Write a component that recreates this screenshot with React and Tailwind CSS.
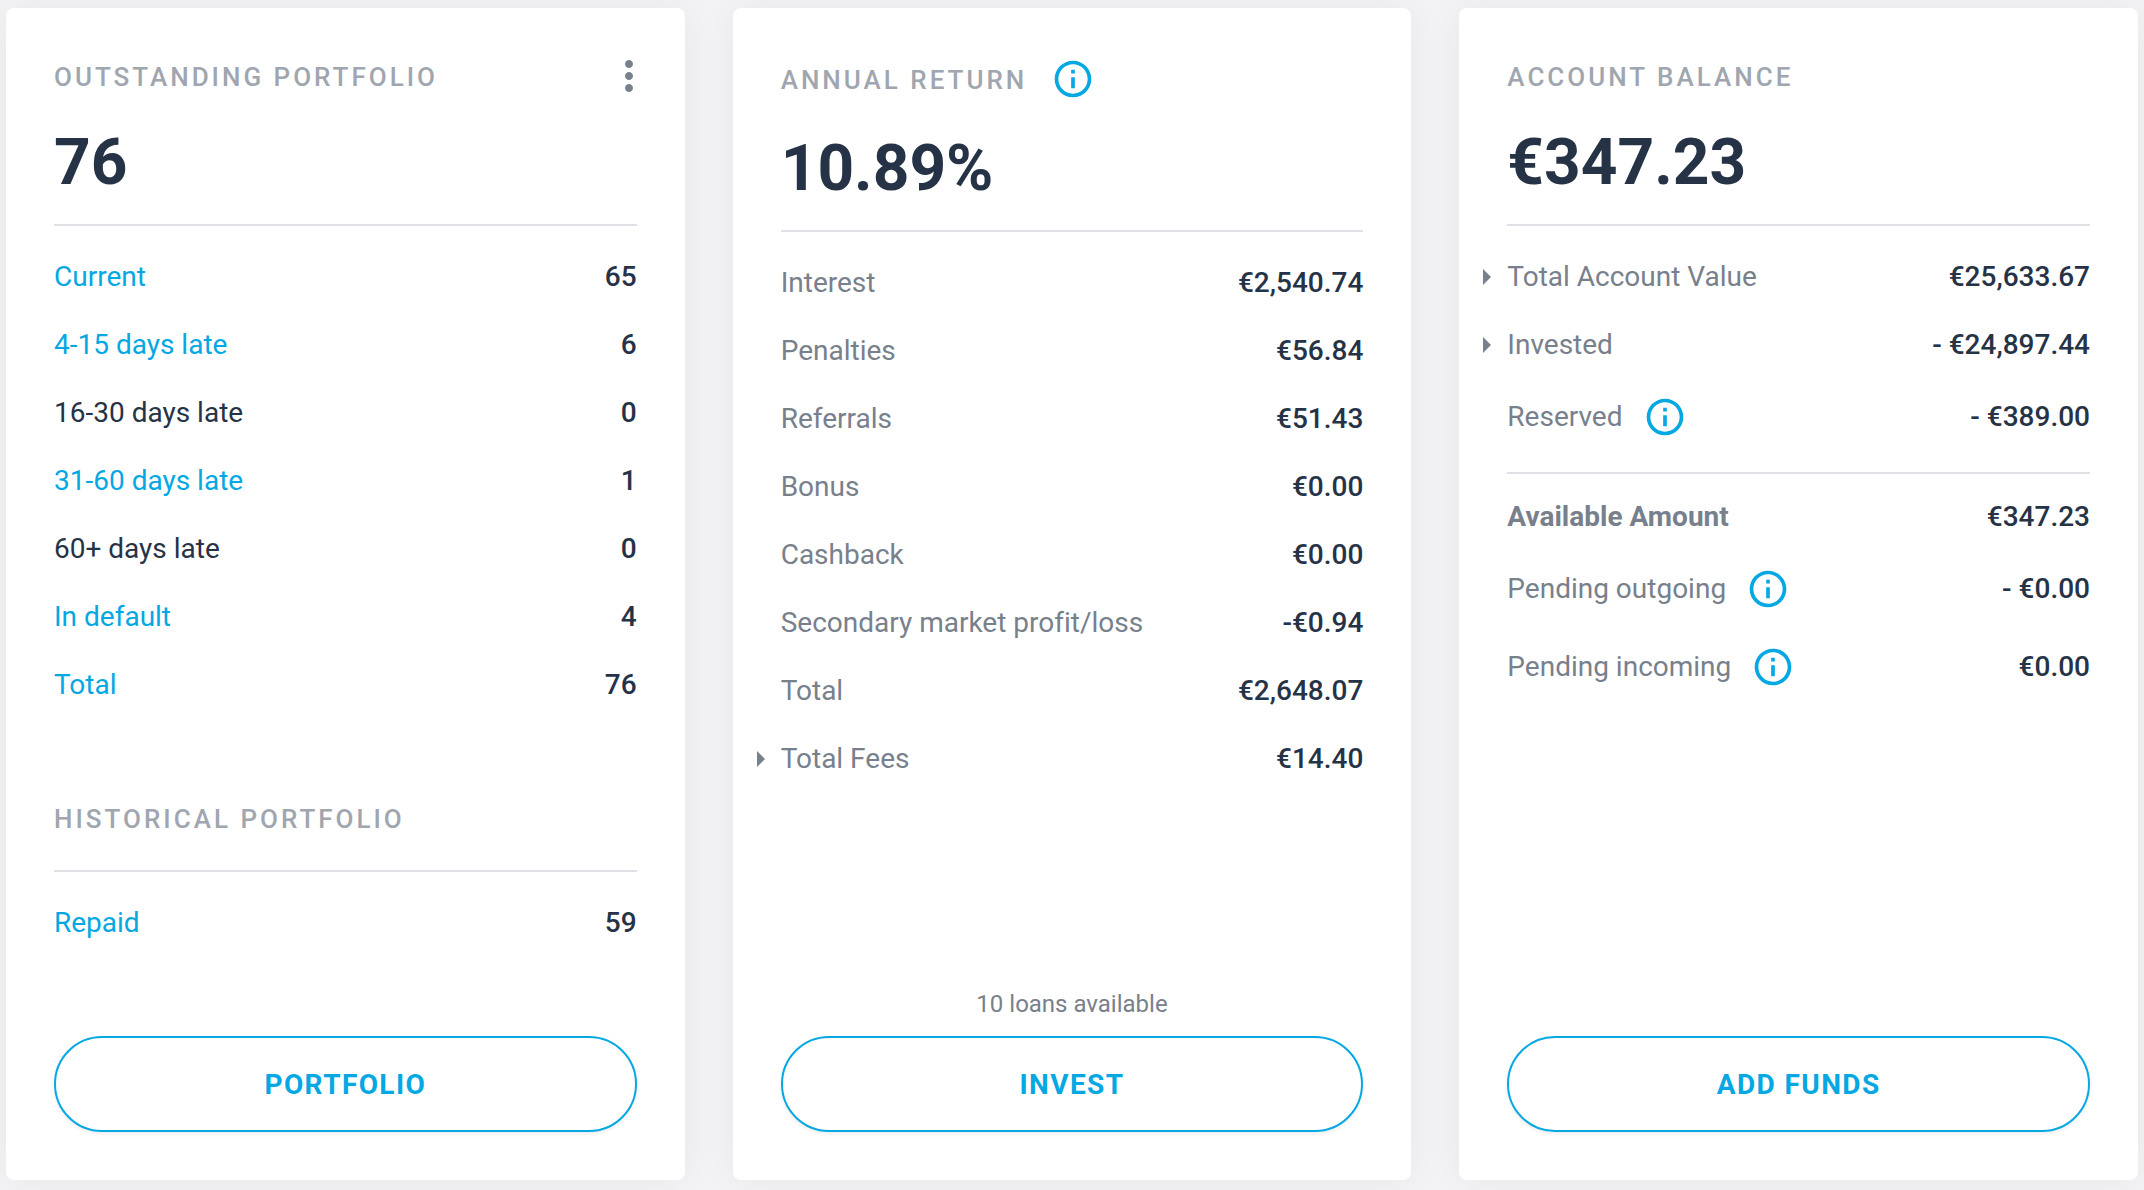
import React from 'react';
import { MdInfoOutline, MdMoreVert } from 'react-icons/md';

const outstanding = [
  { label: 'Current', value: '65', link: true },
  { label: '4-15 days late', value: '6', link: true },
  { label: '16-30 days late', value: '0' },
  { label: '31-60 days late', value: '1', link: true },
  { label: '60+ days late', value: '0' },
  { label: 'In default', value: '4', link: true },
  { label: 'Total', value: '76', link: true },
];

const returns = [
  { label: 'Interest', value: '€2,540.74' },
  { label: 'Penalties', value: '€56.84' },
  { label: 'Referrals', value: '€51.43' },
  { label: 'Bonus', value: '€0.00' },
  { label: 'Cashback', value: '€0.00' },
  { label: 'Secondary market profit/loss', value: '-€0.94' },
  { label: 'Total', value: '€2,648.07' },
  { label: 'Total Fees', value: '€14.40', expandable: true },
];

const balance = [
  { label: 'Total Account Value', value: '€25,633.67', expandable: true },
  { label: 'Invested', value: '- €24,897.44', expandable: true },
  { label: 'Reserved', value: '- €389.00', info: true },
];

const available = [
  { label: 'Available Amount', value: '€347.23', strong: true },
  { label: 'Pending outgoing', value: '- €0.00', info: true },
  { label: 'Pending incoming', value: '€0.00', info: true },
];

function InfoButton({ label }) {
  return (
    <button type="button" aria-label={`About ${label}`} className="text-[#05a8e3]">
      <MdInfoOutline className="size-11" />
    </button>
  );
}

function RowLabel({ row }) {
  if (row.link) {
    return <a href="#" className="text-[#05a8e3]">{row.label}</a>;
  }
  if (row.expandable) {
    return (
      <button type="button" aria-expanded="false" className="-ml-6 flex items-center gap-4">
        <svg viewBox="0 0 8 16" className="h-4 w-2 fill-current">
          <path d="M0 0 L8 8 L0 16 Z" />
        </svg>
        {row.label}
      </button>
    );
  }
  return <span className={row.strong ? 'font-bold' : ''}>{row.label}</span>;
}

function RowList({ rows, color = 'text-[#78808c]' }) {
  return (
    <dl>
      {rows.map((row) => (
        <div
          key={row.label}
          className={`${row.info ? 'h-[78px]' : 'h-[68px] pt-0.5'} flex items-center justify-between text-[28px]`}
        >
          <dt className={`${color} flex items-center gap-5`}>
            <RowLabel row={row} />
            {row.info && <InfoButton label={row.label} />}
          </dt>
          <dd className="font-medium text-[#263346]">{row.value}</dd>
        </div>
      ))}
    </dl>
  );
}

function Title({ children }) {
  return (
    <h2 className="pt-0.5 text-[26px] leading-[38px] font-medium tracking-[3px] text-[#a0a6af] uppercase">
      {children}
    </h2>
  );
}

function Amount({ children }) {
  return (
    <p className="mt-7 border-b-2 border-[#e0e1e6] pb-[22px] text-[64px] leading-[78px] font-bold text-[#263346]">
      {children}
    </p>
  );
}

function Card({ action, note, children }) {
  return (
    <section className="flex flex-col rounded-lg bg-white p-12 shadow-[0_0_40px_rgba(0,0,0,0.05)]">
      {children}
      <div className="mt-auto text-center">
        {note && <p className="mb-3 text-2xl leading-10 text-[#78808c]">{note}</p>}
        <button
          type="button"
          className="h-24 w-full rounded-full border-2 border-[#05a8e3] bg-white pt-0.5 text-[28px] font-bold tracking-[0.05em] text-[#05a8e3] uppercase shadow-[0_2px_4px_rgba(0,0,0,0.08)]"
        >
          {action}
        </button>
      </div>
    </section>
  );
}

function App() {
  return (
    <main className="grid min-h-screen grid-cols-3 gap-12 bg-[#f3f3f5] px-1.5 pt-2 pb-2.5 font-['Roboto',sans-serif] [font-variant-ligatures:none]">
      {/* Outstanding portfolio */}
      <Card action="Portfolio">
        <div className="flex items-center justify-between">
          <Title>Outstanding portfolio</Title>
          <button type="button" aria-label="More options" className="-my-1 -mr-4 text-[#78808c]">
            <MdMoreVert className="size-12" />
          </button>
        </div>
        <Amount>76</Amount>
        <div className="mt-4">
          <RowList rows={outstanding} color="text-[#263346]" />
        </div>
        <div className="mt-20 border-b-2 border-[#e0e1e6] pb-8">
          <Title>Historical portfolio</Title>
        </div>
        <div className="mt-4">
          <RowList rows={[{ label: 'Repaid', value: '59', link: true }]} />
        </div>
      </Card>

      {/* Annual return */}
      <Card action="Invest" note="10 loans available">
        <div className="flex items-center gap-6 py-px">
          <Title>Annual return</Title>
          <InfoButton label="Annual return" />
        </div>
        <Amount>10.89%</Amount>
        <div className="mt-4">
          <RowList rows={returns} />
        </div>
      </Card>

      {/* Account balance */}
      <Card action="Add funds">
        <Title>Account balance</Title>
        <Amount>€347.23</Amount>
        <div className="mt-4">
          <RowList rows={balance} />
        </div>
        <div className="mt-4 border-t-2 border-[#e0e1e6] pt-2">
          <RowList rows={available} />
        </div>
      </Card>
    </main>
  );
}

export default App;
